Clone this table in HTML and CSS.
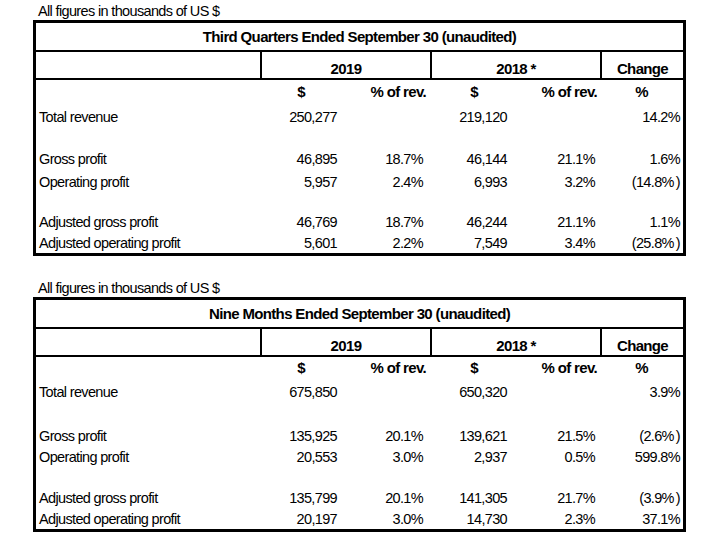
FILE: index.html
```html
<!DOCTYPE html>
<html lang="en">
<head>
<meta charset="utf-8">
<title>Financial results</title>
<link rel="stylesheet" href="styles.css">
</head>
<body>
<div class="page">
  <section class="report">
    <p class="caption">All figures in thousands of US $</p>
    <table class="fin fin--q">
      <colgroup>
        <col class="c-label"><col class="c-num"><col class="c-num"><col class="c-num"><col class="c-num"><col class="c-ch">
      </colgroup>
      <thead>
        <tr class="r-title"><th colspan="6">Third Quarters Ended September 30 (unaudited)</th></tr>
        <tr class="r-year"><th></th><th colspan="2" class="div">2019</th><th colspan="2" class="div">2018 *</th><th class="div">Change</th></tr>
        <tr class="r-unit"><th></th><th>$</th><th>% of rev.</th><th>$</th><th>% of rev.</th><th>%</th></tr>
      </thead>
      <tbody>
        <tr class="r-rev"><td>Total revenue</td><td>250,277</td><td></td><td>219,120</td><td></td><td>14.2%</td></tr>
        <tr class="gap-a"><td colspan="6"></td></tr>
        <tr class="r-gross"><td>Gross profit</td><td>46,895</td><td>18.7%</td><td>46,144</td><td>21.1%</td><td>1.6%</td></tr>
        <tr class="r-op"><td>Operating profit</td><td>5,957</td><td>2.4%</td><td>6,993</td><td>3.2%</td><td>(14.8%<span class="rp">)</span></td></tr>
        <tr class="gap-b"><td colspan="6"></td></tr>
        <tr class="r-agross"><td>Adjusted gross profit</td><td>46,769</td><td>18.7%</td><td>46,244</td><td>21.1%</td><td>1.1%</td></tr>
        <tr class="r-aop"><td>Adjusted operating profit</td><td>5,601</td><td>2.2%</td><td>7,549</td><td>3.4%</td><td>(25.8%<span class="rp">)</span></td></tr>
      </tbody>
    </table>
  </section>

  <section class="report">
    <p class="caption">All figures in thousands of US $</p>
    <table class="fin fin--ytd">
      <colgroup>
        <col class="c-label"><col class="c-num"><col class="c-num"><col class="c-num"><col class="c-num"><col class="c-ch">
      </colgroup>
      <thead>
        <tr class="r-title"><th colspan="6">Nine Months Ended September 30 (unaudited)</th></tr>
        <tr class="r-year"><th></th><th colspan="2" class="div">2019</th><th colspan="2" class="div">2018 *</th><th class="div">Change</th></tr>
        <tr class="r-unit"><th></th><th>$</th><th>% of rev.</th><th>$</th><th>% of rev.</th><th>%</th></tr>
      </thead>
      <tbody>
        <tr class="r-rev"><td>Total revenue</td><td>675,850</td><td></td><td>650,320</td><td></td><td>3.9%</td></tr>
        <tr class="gap-a"><td colspan="6"></td></tr>
        <tr class="r-gross"><td>Gross profit</td><td>135,925</td><td>20.1%</td><td>139,621</td><td>21.5%</td><td>(2.6%<span class="rp">)</span></td></tr>
        <tr class="r-op"><td>Operating profit</td><td>20,553</td><td>3.0%</td><td>2,937</td><td>0.5%</td><td>599.8%</td></tr>
        <tr class="gap-b"><td colspan="6"></td></tr>
        <tr class="r-agross"><td>Adjusted gross profit</td><td>135,799</td><td>20.1%</td><td>141,305</td><td>21.7%</td><td>(3.9%<span class="rp">)</span></td></tr>
        <tr class="r-aop"><td>Adjusted operating profit</td><td>20,197</td><td>3.0%</td><td>14,730</td><td>2.3%</td><td>37.1%</td></tr>
      </tbody>
    </table>
  </section>
</div>
</body>
</html>
```

FILE: styles.css
```css
* { box-sizing: border-box; }

body {
  margin: 0;
  background: #fff;
  color: #000;
  font-family: "Liberation Sans", Arial, sans-serif;
  font-size: 14.5px;
  letter-spacing: -0.65px;
}

.page {
  padding: 2px 0 0 33px;
}

.report + .report {
  margin-top: 23px;
}

.caption {
  margin: 0;
  padding-left: 5px;
  height: 18px;
  line-height: 18px;
}

.fin {
  width: 653px;
  table-layout: fixed;
  border-collapse: separate;
  border-spacing: 0;
  border: 3px solid #000;
}

.c-label { width: 224px; }
.c-num { width: 85px; }
.c-ch { width: 83px; }

.fin th,
.fin td {
  padding: 0;
  line-height: 16px;
  white-space: nowrap;
  vertical-align: middle;
}

.fin th {
  font-weight: bold;
  font-size: 15px;
  letter-spacing: -0.65px;
}

/* title row */
.r-title th {
  height: 29px;
  text-align: center;
  border-bottom: 2px solid #000;
}

/* year row */
.r-year th {
  height: 28px;
  text-align: center;
  vertical-align: bottom;
  padding-bottom: 1px;
  border-bottom: 2px solid #000;
}
.r-year th.div {
  border-left: 2px solid #000;
}

/* unit row */
.r-unit th { text-align: right; }
.r-unit th:nth-child(2) { padding-right: 40px; }
.r-unit th:nth-child(3) { padding-right: 4px; }
.r-unit th:nth-child(4) { padding-right: 37px; }
.r-unit th:nth-child(5) { padding-right: 3px; }
.r-unit th:nth-child(6) { text-align: center; }

/* body cells */
.fin tbody td { text-align: right; }
.fin tbody td:first-child { text-align: left; padding-left: 3px; }
.fin tbody td:nth-child(2) { padding-right: 8px; }
.fin tbody td:nth-child(3) { padding-right: 7px; }
.fin tbody td:nth-child(4) { padding-right: 8px; }
.fin tbody td:nth-child(5) { padding-right: 5px; }
.fin tbody td:nth-child(6) { padding-right: 3px; }
.fin tbody td[colspan] { padding: 0; }

.rp { margin-left: 2px; }

/* row heights: quarter table */
.fin--q .r-unit th { height: 23px; }
.fin--q .r-rev td { height: 28px; }
.fin--q .gap-a td { height: 16px; }
.fin--q .r-gross td { height: 24px; }
.fin--q .r-op td { height: 22px; }
.fin--q .gap-b td { height: 19px; }
.fin--q .r-agross td { height: 20px; }
.fin--q .r-aop td { height: 21px; }

/* row heights: nine-month table */
.fin--ytd .r-unit th { height: 22px; }
.fin--ytd .r-rev td { height: 26px; }
.fin--ytd .gap-a td { height: 20px; }
.fin--ytd .r-gross td { height: 22px; }
.fin--ytd .r-op td { height: 20px; }
.fin--ytd .gap-b td { height: 21px; }
.fin--ytd .r-agross td { height: 20px; }
.fin--ytd .r-aop td { height: 21px; }
```
